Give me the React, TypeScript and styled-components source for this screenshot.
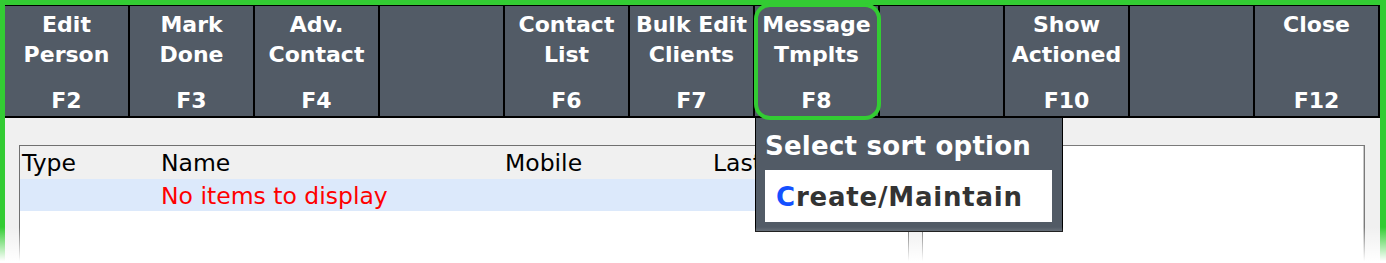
import React from "react";
import styled, { createGlobalStyle } from "styled-components";

const GlobalStyle = createGlobalStyle`
  html, body {
    margin: 0;
    padding: 0;
    background: #ffffff;
  }
  body {
    font-family: "DejaVu Sans", Verdana, sans-serif;
  }
`;

const Page = styled.div`
  position: relative;
  width: 1386px;
  height: 263px;
  overflow: hidden;
`;

const Frame = styled.div`
  box-sizing: border-box;
  width: 1386px;
  height: 263px;
  border-top: 5px solid #33cc33;
  border-left: 5px solid #33cc33;
  border-right: 6px solid #33cc33;
  background: #f0f0f0;
  display: flex;
  flex-direction: column;
`;

const Toolbar = styled.div`
  display: grid;
  grid-template-columns: repeat(11, 125px);
  border-top: 1px solid #000000;
  border-bottom: 2px solid #000000;
  background: #525b66;
`;

const KeyButton = styled.div<{ $focused?: boolean }>`
  position: relative;
  box-sizing: border-box;
  height: 110px;
  border-right: 2px solid #000000;
  display: flex;
  flex-direction: column;
  justify-content: space-between;
  align-items: center;
  padding: 4px 0 0;
  color: #ffffff;
  font-family: "DejaVu Sans", Verdana, sans-serif;
  font-weight: 700;
  font-size: 22px;
  line-height: 30px;
  text-align: center;
  white-space: nowrap;

  ${(p) =>
    p.$focused &&
    `
    &::after {
      content: "";
      position: absolute;
      top: -3px;
      left: -1px;
      right: -3px;
      bottom: -4px;
      border: 4px solid #33cc33;
      border-radius: 16px;
      z-index: 3;
      pointer-events: none;
    }
  `}
`;

const Label = styled.div`
  display: flex;
  flex-direction: column;
`;

const Key = styled.div`
  line-height: 30px;
  padding-bottom: 0;
`;

const Popup = styled.div`
  position: absolute;
  top: calc(100% + 1px);
  left: 0;
  z-index: 2;
  box-sizing: border-box;
  width: 308px;
  height: 115px;
  background: #525b66;
  border: 1px solid #000000;
  padding: 8px 9px 0 9px;
  text-align: left;
  font-family: "DejaVu Sans", Verdana, sans-serif;
  font-weight: 700;
`;

const PopupTitle = styled.div`
  color: #ffffff;
  font-size: 26px;
  line-height: 40px;
  letter-spacing: 0.25px;
  margin-bottom: 4px;
`;

const PopupItem = styled.div`
  box-sizing: border-box;
  width: 287px;
  height: 52px;
  background: #ffffff;
  color: #333333;
  font-size: 26px;
  line-height: 54px;
  letter-spacing: 0.8px;
  padding-left: 11px;

  span {
    color: #1450ff;
  }
`;

const Body = styled.div`
  flex: 1;
  display: flex;
  gap: 13px;
  padding: 27px 15px 0 14px;
  min-height: 0;
`;

const ListBox = styled.div`
  box-sizing: border-box;
  width: 890px;
  height: 200px;
  border: 1px solid #707070;
  background: #ffffff;
  font-family: "DejaVu Sans", Verdana, sans-serif;
  font-size: 23.5px;
`;

const Row = styled.div<{ $header?: boolean }>`
  display: grid;
  grid-template-columns: 139px 344px 208px 1fr;
  height: ${(p) => (p.$header ? "33px" : "32px")};
  line-height: ${(p) => (p.$header ? "35px" : "34px")};
  padding-left: 2px;
  background: ${(p) => (p.$header ? "#f0f0f0" : "#dce9fb")};
  color: ${(p) => (p.$header ? "#000000" : "#ff0000")};
  white-space: nowrap;
  overflow: hidden;
`;

const SideBox = styled.div`
  box-sizing: border-box;
  width: 443px;
  height: 200px;
  background: #ffffff;
  border: 1px solid #7a7a7a;
  box-shadow: inset -1px -1px 0 #c8c8c8;
`;

const Fade = styled.div`
  position: absolute;
  left: 0;
  right: 0;
  bottom: 0;
  height: 36px;
  background: linear-gradient(to bottom, rgba(255, 255, 255, 0), #ffffff 95%);
  pointer-events: none;
  z-index: 5;
`;

const keys = [
  { label: ["Edit", "Person"], key: "F2" },
  { label: ["Mark", "Done"], key: "F3" },
  { label: ["Adv.", "Contact"], key: "F4" },
  { label: [], key: "" },
  { label: ["Contact", "List"], key: "F6" },
  { label: ["Bulk Edit", "Clients"], key: "F7" },
  { label: ["Message", "Tmplts"], key: "F8", focused: true },
  { label: [], key: "" },
  { label: ["Show", "Actioned"], key: "F10" },
  { label: [], key: "" },
  { label: ["Close"], key: "F12" },
];

export default function App() {
  return (
    <>
      <GlobalStyle />
      <Page>
        <Frame>
          <Toolbar>
            {keys.map((k, i) => (
              <KeyButton key={i} $focused={k.focused}>
                <Label>
                  {k.label.map((l) => (
                    <span key={l}>{l}</span>
                  ))}
                </Label>
                <Key>{k.key}</Key>
                {k.focused && (
                  <Popup>
                    <PopupTitle>Select sort option</PopupTitle>
                    <PopupItem>
                      <span>C</span>reate/Maintain
                    </PopupItem>
                  </Popup>
                )}
              </KeyButton>
            ))}
          </Toolbar>
          <Body>
            <ListBox>
              <Row $header>
                <div>Type</div>
                <div>Name</div>
                <div>Mobile</div>
                <div>Last</div>
              </Row>
              <Row>
                <div />
                <div>No items to display</div>
                <div />
                <div />
              </Row>
            </ListBox>
            <SideBox />
          </Body>
        </Frame>
        <Fade />
      </Page>
    </>
  );
}
